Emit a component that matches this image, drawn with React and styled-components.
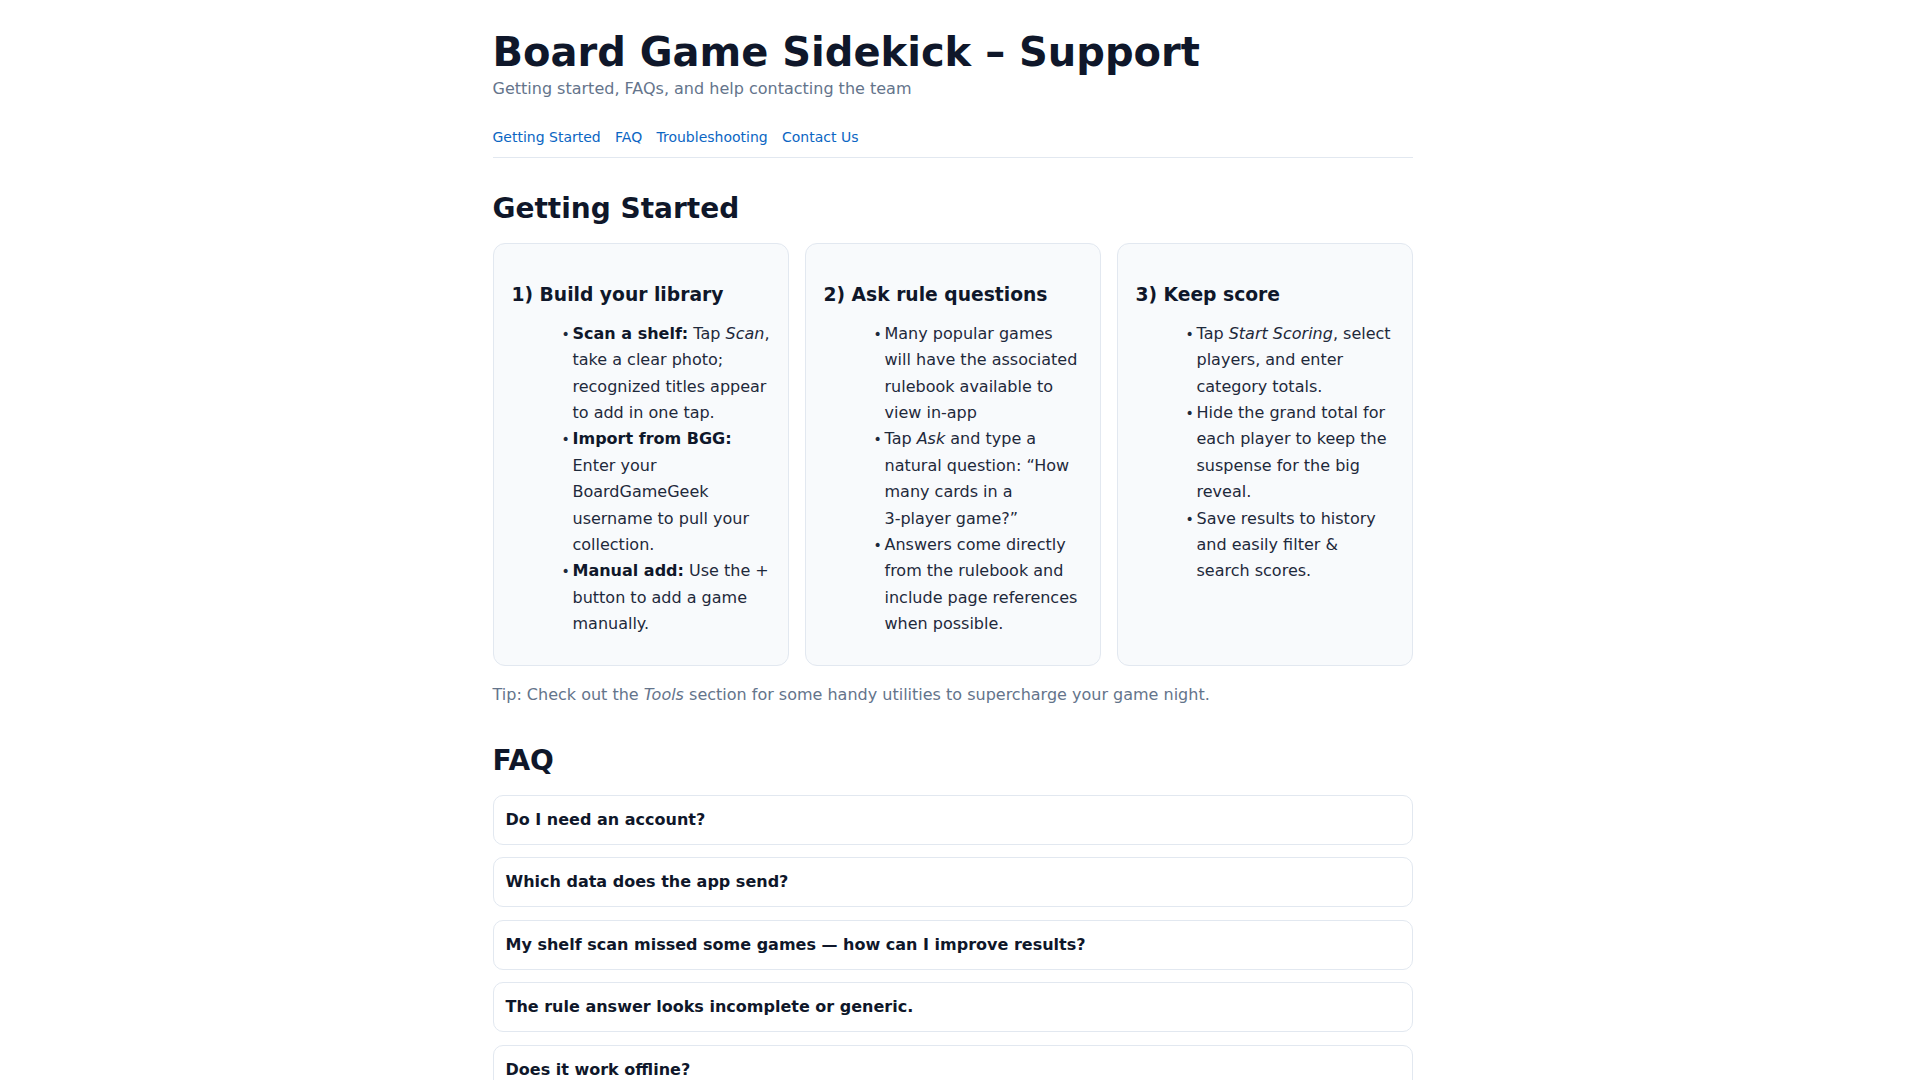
import React from 'react';
import styled, { createGlobalStyle } from 'styled-components';

const GlobalStyle = createGlobalStyle`
  html, body {
    margin: 0;
    padding: 0;
    background: #ffffff;
  }
  body {
    font-family: "DejaVu Sans", "Noto Sans", sans-serif;
    font-size: 16px;
    line-height: 1.65;
    color: #1e293b;
  }
`;

// leaves room for the scrollbar gutter so the column centres like the reference
const Viewport = styled.div`
  padding-right: 15px;
`;

const Page = styled.div`
  max-width: 920px;
  margin: 0 auto;
  padding: 28px 0 60px;
`;

const Header = styled.header`
  display: flex;
  flex-direction: column;
`;

const Title = styled.h1`
  margin: 0;
  font-size: 40px;
  line-height: 1.2;
  font-weight: 700;
  color: #0f172a;
`;

const Subtitle = styled.p`
  margin: 0;
  color: #64748b;
`;

const Nav = styled.nav`
  display: flex;
  gap: 14.3px;
  margin-top: 24px;
  padding-bottom: 8px;
  border-bottom: 1px solid #e2e8f0;
  font-size: 14px;
`;

const NavLink = styled.a`
  color: #0b66c3;
  text-decoration: none;
`;

const Section = styled.section`
  margin-top: 33px;
`;

const SectionTitle = styled.h2`
  margin: 0 0 17px;
  font-size: 28px;
  line-height: 1.25;
  font-weight: 700;
  color: #0f172a;
`;

const CardGrid = styled.div`
  display: grid;
  grid-template-columns: repeat(3, 1fr);
  gap: 16px;
`;

const Card = styled.div`
  background: #f8fafc;
  border: 1px solid #e2e8f0;
  border-radius: 12px;
  padding: 0 18px 18px;
`;

const CardTitle = styled.h3`
  margin: 39px 0 13px;
  font-size: 18.72px;
  line-height: 1.3;
  font-weight: 700;
  color: #0f172a;
`;

const StepList = styled.ul`
  margin: 0 0 9px;
  padding-left: 61px;

  li::marker {
    content: "•\\2009";
    font-size: 14px;
  }

  strong {
    color: #0f172a;
  }
`;

const Tip = styled.p`
  margin: 16.5px 0 0;
  padding-bottom: 1.5px;
  color: #64748b;
`;

const FaqItem = styled.details`
  border: 1px solid #e2e8f0;
  border-radius: 10px;
  background: #ffffff;
  margin-bottom: 12.5px;
`;

const FaqQuestion = styled.summary`
  list-style: none;
  padding: 12px;
  font-weight: 700;
  line-height: 1.5;
  color: #0f172a;
  cursor: pointer;
  &::-webkit-details-marker {
    display: none;
  }
`;

const FaqAnswer = styled.p`
  margin: 0;
  padding: 0 12px 12px;
`;

const faqs = [
  ['Do I need an account?', 'No. Your library and scores are stored on your device. An account is only needed to sync across devices.'],
  ['Which data does the app send?', 'Only the photos you scan and the questions you ask, so we can answer them. Nothing is sold or shared.'],
  ['My shelf scan missed some games — how can I improve results?', 'Use good lighting, keep spines straight and take the photo square-on. You can always add missing games manually.'],
  ['The rule answer looks incomplete or generic.', 'Try rephrasing the question with more detail, or check the page reference in the rulebook.'],
  ['Does it work offline?', 'Your library and scoring work offline. Scanning and rule questions need a connection.'],
];

function App() {
  return (
    <Viewport>
      <GlobalStyle />
      <Page>
        <Header>
          <Title>Board Game Sidekick – Support</Title>
          <Subtitle>Getting started, FAQs, and help contacting the team</Subtitle>
          <Nav>
            <NavLink href="#getting-started">Getting Started</NavLink>
            <NavLink href="#faq">FAQ</NavLink>
            <NavLink href="#troubleshooting">Troubleshooting</NavLink>
            <NavLink href="#contact">Contact Us</NavLink>
          </Nav>
        </Header>

        <Section id="getting-started">
          <SectionTitle>Getting Started</SectionTitle>
          <CardGrid>
            <Card>
              <CardTitle>1) Build your library</CardTitle>
              <StepList>
                <li><strong>Scan a shelf:</strong> Tap <em>Scan</em>, take a clear photo; recognized titles appear to add in one tap.</li>
                <li><strong>Import from BGG:</strong> Enter your BoardGameGeek username to pull your collection.</li>
                <li><strong>Manual add:</strong> Use the + button to add a game manually.</li>
              </StepList>
            </Card>
            <Card>
              <CardTitle>2) Ask rule questions</CardTitle>
              <StepList>
                <li>Many popular games will have the associated rulebook available to view in-app</li>
                <li>Tap <em>Ask</em> and type a natural question: “How many cards in a 3‑player game?”</li>
                <li>Answers come directly from the rulebook and include page references when possible.</li>
              </StepList>
            </Card>
            <Card>
              <CardTitle>3) Keep score</CardTitle>
              <StepList>
                <li>Tap <em>Start Scoring</em>, select players, and enter category totals.</li>
                <li>Hide the grand total for each player to keep the suspense for the big reveal.</li>
                <li>Save results to history and easily filter &amp; search scores.</li>
              </StepList>
            </Card>
          </CardGrid>
          <Tip>Tip: Check out the <em>Tools</em> section for some handy utilities to supercharge your game night.</Tip>
        </Section>

        <Section id="faq">
          <SectionTitle>FAQ</SectionTitle>
          {faqs.map(([q, a]) => (
            <FaqItem key={q}>
              <FaqQuestion>{q}</FaqQuestion>
              <FaqAnswer>{a}</FaqAnswer>
            </FaqItem>
          ))}
        </Section>

        <Section id="troubleshooting">
          <SectionTitle>Troubleshooting</SectionTitle>
          <StepList as="ol">
            <li>Make sure the app is updated to the latest version.</li>
            <li>Restart the app and try again.</li>
            <li>Check that camera access is allowed in your device settings.</li>
          </StepList>
        </Section>

        <Section id="contact">
          <SectionTitle>Contact Us</SectionTitle>
          <Tip>Still stuck? Email the team and we will get back to you as soon as we can.</Tip>
        </Section>
      </Page>
    </Viewport>
  );
}

export default App;
